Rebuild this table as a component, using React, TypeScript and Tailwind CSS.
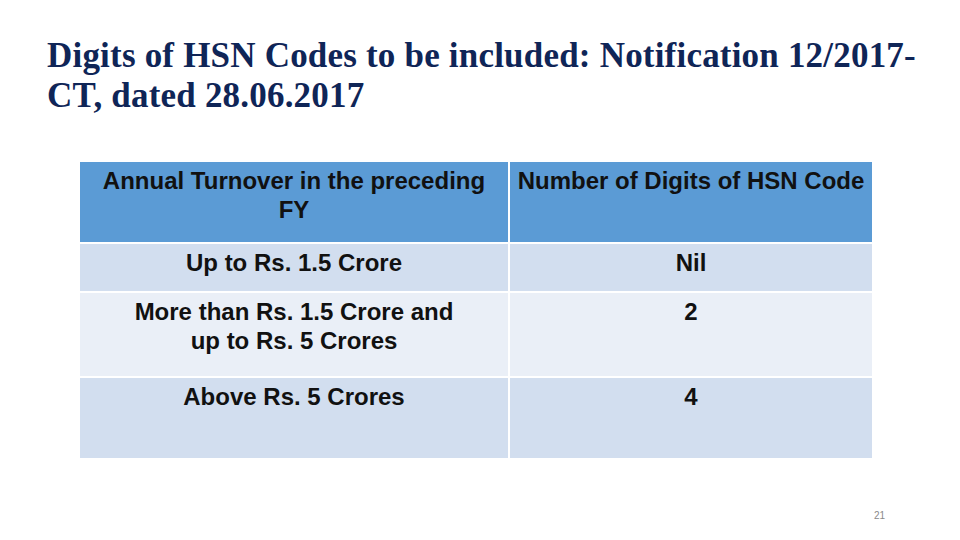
const rows = [
  { left: ["Up to Rs. 1.5 Crore"], right: "Nil", h: "h-[47px]", bg: "bg-[#d2deef]" },
  { left: ["More than Rs. 1.5 Crore and", "up to Rs. 5 Crores"], right: "2", h: "h-[83px]", bg: "bg-[#eaeff7]" },
  { left: ["Above Rs. 5 Crores"], right: "4", h: "h-[80px]", bg: "bg-[#d2deef]" },
];

export default function App() {
  return (
    <div className="relative w-[960px] h-[540px] bg-white overflow-hidden">
      <h1 className="pl-[47px] pt-[36px] w-[950px] text-[35px] leading-[40px] font-bold text-[#0f2557] font-['Liberation_Serif',serif] tracking-[0.2px]">
        Digits of HSN Codes to be included: Notification 12/2017-
        <br />
        CT, dated 28.06.2017
      </h1>

      <div className="ml-[80px] mt-[46px] w-[792px] flex flex-col gap-[2px] font-['Liberation_Sans',Arial,sans-serif] text-[24px] font-bold leading-[29px] text-[#111] text-center whitespace-nowrap">
        <div className="flex gap-[2px] h-[80px]">
          <div className="w-[428px] pt-[4px] bg-[#5b9bd5]">
            Annual Turnover in the preceding
            <br />
            FY
          </div>
          <div className="flex-1 pt-[4px] bg-[#5b9bd5]">Number of Digits of HSN Code</div>
        </div>
        {rows.map((r) => (
          <div key={r.right} className={`flex gap-[2px] ${r.h}`}>
            <div className={`w-[428px] pt-[4px] flex flex-col ${r.bg}`}>
              {r.left.map((l) => (
                <span key={l}>{l}</span>
              ))}
            </div>
            <div className={`flex-1 pt-[4px] ${r.bg}`}>{r.right}</div>
          </div>
        ))}
      </div>

      <div className="absolute left-[874px] top-[508px] text-[10px] text-[#8a8a8a] font-['Liberation_Sans',Arial,sans-serif]">
        21
      </div>
    </div>
  );
}
